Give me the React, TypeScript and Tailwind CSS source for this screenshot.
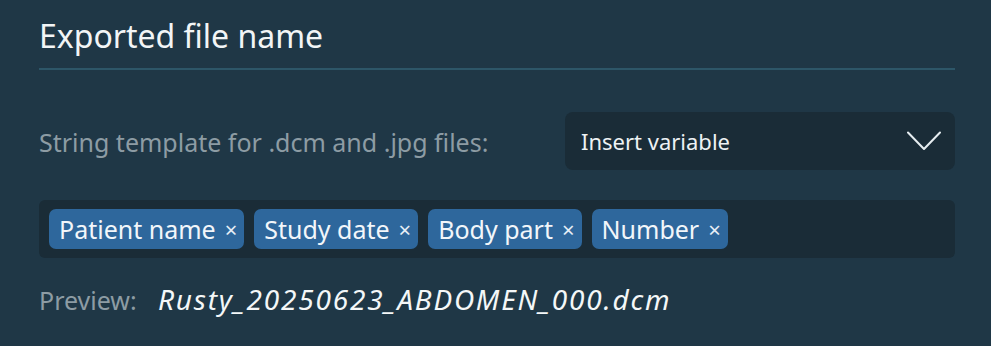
import React from 'react';

const tags = ['Patient name', 'Study date', 'Body part', 'Number'];

function Chevron() {
    return (
        <svg width="34" height="20" viewBox="0 0 34 20" fill="none" stroke="#e6edf0" strokeWidth="2" strokeLinecap="round" strokeLinejoin="round">
            <path d="M1 1.5 L17 18 L33 1.5" />
        </svg>
    );
}

export default function App() {
    return (
        <div className="w-[991px] h-[346px] bg-[#1f3746] px-[39px] pt-[14px] text-white overflow-hidden" style={{ fontFamily: '"Noto Sans", "Open Sans", sans-serif' }}>
            <h1 className="text-[32px] leading-[44px] text-[#f2f5f6] w-[916px] border-b-2 border-[#2d5668] pb-[10px]">
                Exported file name
            </h1>

            <div className="flex items-center justify-between w-[916px] mt-[42px]">
                <span className="text-[25px] text-[#8d9ca4] pt-[4px]">String template for .dcm and .jpg files:</span>
                <div className="w-[390px] h-[58px] rounded-[8px] bg-[#1a2c37] flex items-center justify-between pl-[16px] pr-[14px]">
                    <span className="text-[22px] text-[#eef2f4]">Insert variable</span>
                    <Chevron />
                </div>
            </div>

            <div className="w-[916px] h-[58px] mt-[30px] rounded-[6px] bg-[#1a2c37] flex items-center gap-[10px] px-[10px]">
                {tags.map((t) => (
                    <div key={t} className="h-[40px] rounded-[7px] bg-[#2e679c] flex items-center pl-[10px] pr-[7px] gap-[9px]">
                        <span className="text-[25px] text-[#f2f6fa] leading-none">{t}</span>
                        <span className="text-[22px] text-[#e6eef6] leading-none">×</span>
                    </div>
                ))}
            </div>

            <div className="flex items-baseline mt-[20px]">
                <span className="text-[25px] text-[#8d9ca4] w-[119px]">Preview:</span>
                <span className="text-[28px] italic text-[#f4f7f8] tracking-[1.8px]">Rusty_20250623_ABDOMEN_000.dcm</span>
            </div>
        </div>
    );
}
